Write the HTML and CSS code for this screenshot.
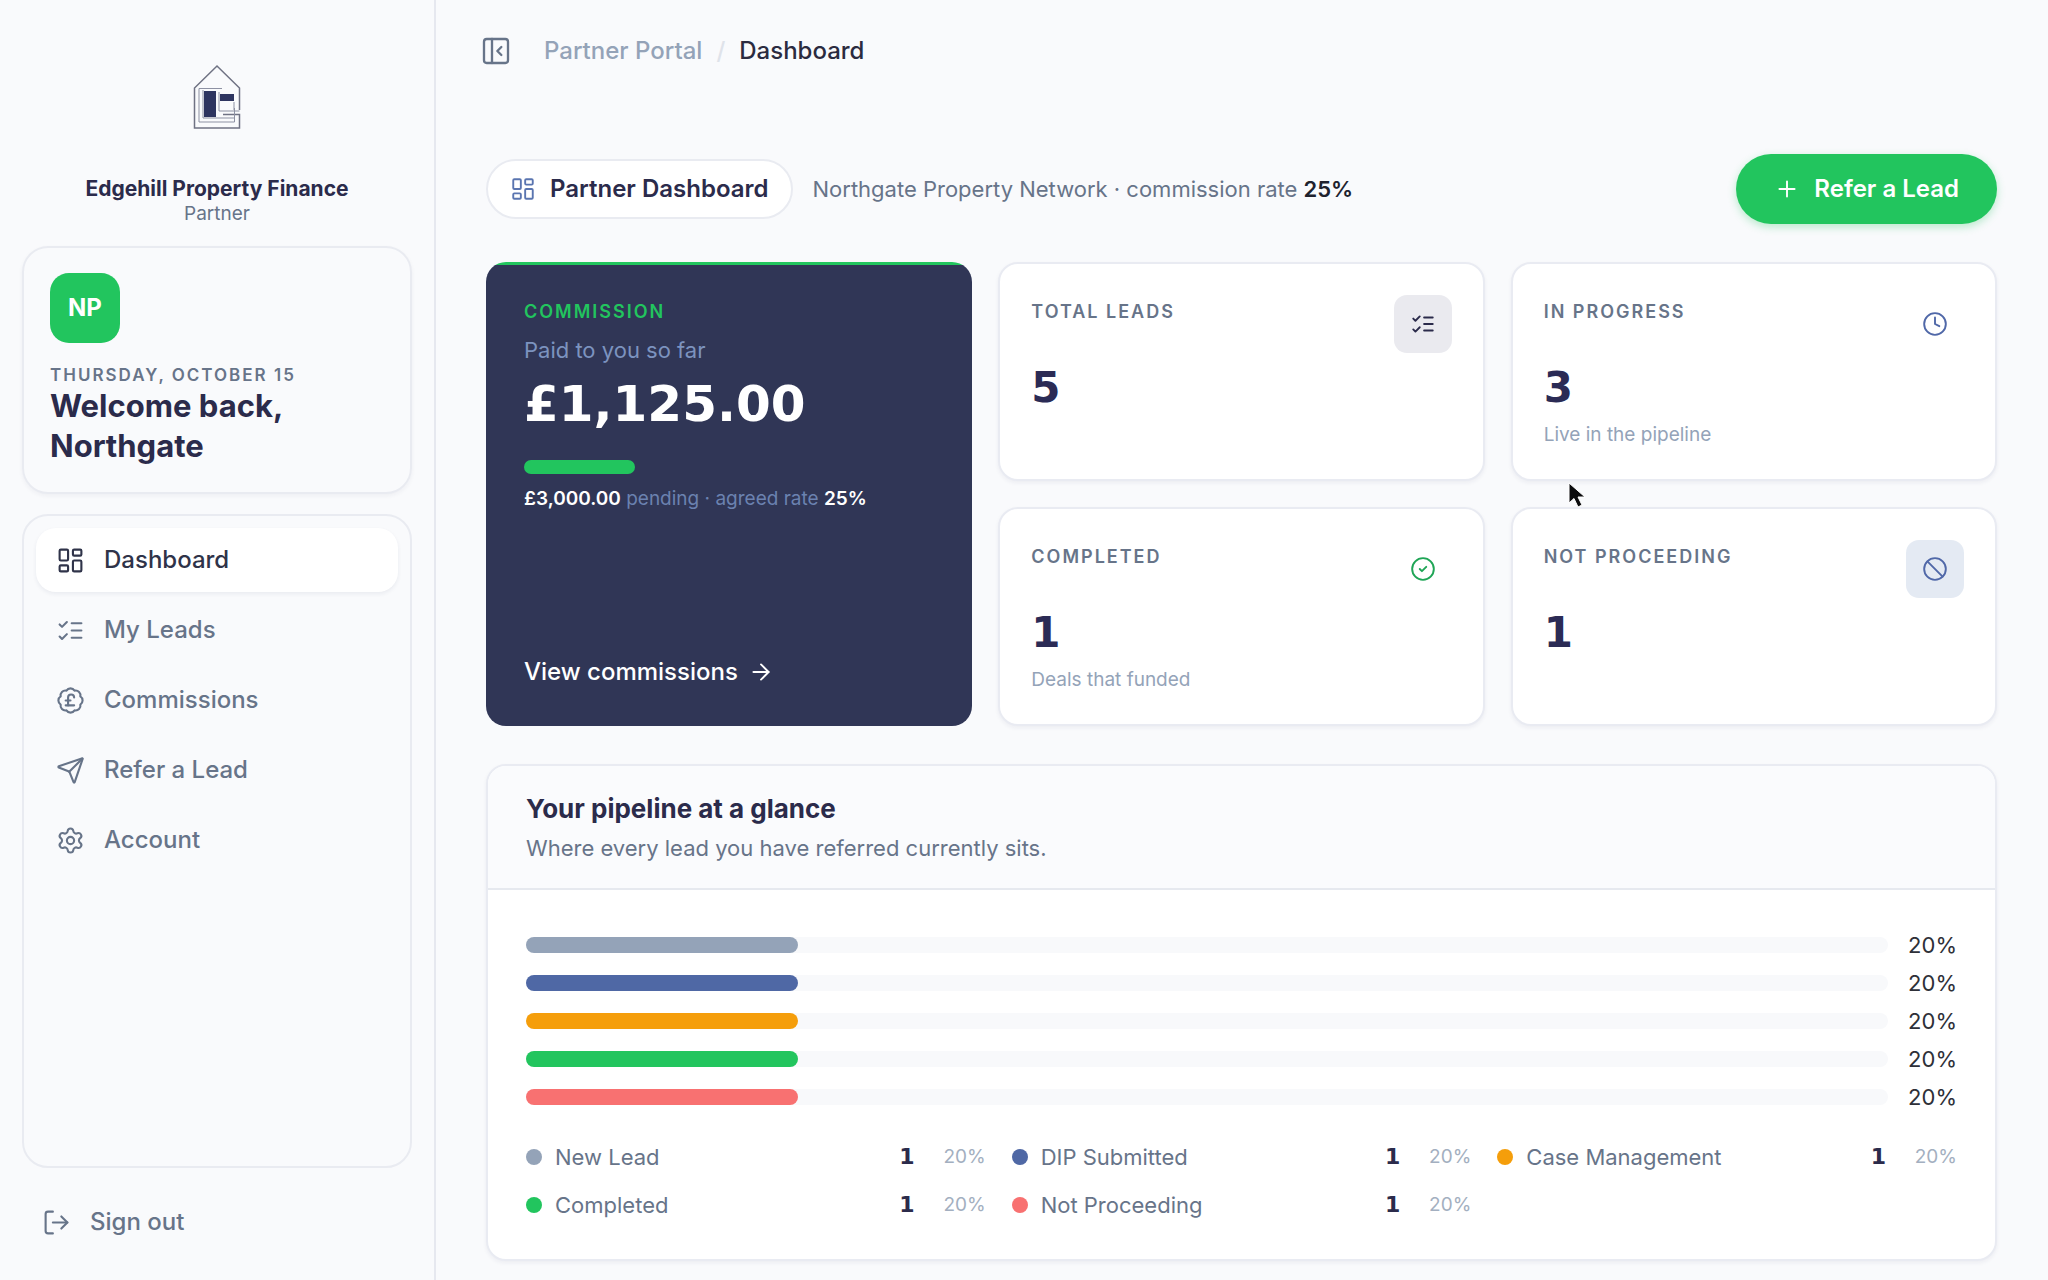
FILE: index.html
```html
<!DOCTYPE html>
<html lang="en">
<head>
    <meta charset="UTF-8">
    <meta name="viewport" content="width=device-width, initial-scale=1.0">
    <title>Partner Dashboard</title>
    <link rel="stylesheet" href="styles.css">
</head>
<body>
    <!-- icons used more than once -->
    <svg class="sprite" aria-hidden="true">
        <symbol id="i-dashboard" viewBox="0 0 24 24">
            <rect x="3" y="3" width="7" height="9" rx="1"/>
            <rect x="14" y="3" width="7" height="5" rx="1"/>
            <rect x="14" y="12" width="7" height="9" rx="1"/>
            <rect x="3" y="16" width="7" height="5" rx="1"/>
        </symbol>
        <symbol id="i-list" viewBox="0 0 24 24">
            <path d="m3 17 2 2 4-4"/><path d="m3 7 2 2 4-4"/>
            <path d="M13 6h8"/><path d="M13 12h8"/><path d="M13 18h8"/>
        </symbol>
    </svg>

    <div class="layout">
        <aside class="sidebar">
            <div class="brand">
                <svg class="logo" viewBox="0 0 48 66">
                    <path class="logo-line" d="M46.500 46V24L24 2 1.500 24v40h45V50.500H30"/>
                    <path class="logo-thin" d="M46.500 47H26V28"/>
                    <path class="logo-thin" d="M29 24.500H6v33.500h35.500V44M10 26v28h31M41 38v8"/>
                    <rect class="logo-fill" x="11" y="27" width="12" height="26"/>
                    <rect class="logo-fill" x="27" y="30" width="14" height="7"/>
                </svg>
                <strong class="brand-name">Edgehill Property Finance</strong>
                <span class="brand-role">Partner</span>
            </div>

            <div class="welcome">
                <div class="avatar">NP</div>
                <p class="date">Thursday, October 15</p>
                <h2>Welcome back,<br>Northgate</h2>
            </div>

            <nav class="nav">
                <a href="#" class="nav-item active">
                    <svg class="icon"><use href="#i-dashboard"/></svg>
                    Dashboard
                </a>
                <a href="#" class="nav-item">
                    <svg class="icon"><use href="#i-list"/></svg>
                    My Leads
                </a>
                <a href="#" class="nav-item">
                    <svg class="icon" viewBox="0 0 24 24">
                        <path d="M3.850 8.620a4 4 0 0 1 4.780-4.770 4 4 0 0 1 6.740 0 4 4 0 0 1 4.780 4.780 4 4 0 0 1 0 6.740 4 4 0 0 1-4.770 4.780 4 4 0 0 1-6.750 0 4 4 0 0 1-4.780-4.770 4 4 0 0 1 0-6.760Z"/>
                        <path d="M8 12h4"/><path d="M10 16V9.500a2.500 2.500 0 0 1 5 0"/><path d="M8 16h7"/>
                    </svg>
                    Commissions
                </a>
                <a href="#" class="nav-item">
                    <svg class="icon" viewBox="0 0 24 24">
                        <path d="M14.536 21.686a.5.5 0 0 0 .937-.024l6.500-19a.496.496 0 0 0-.635-.635l-19 6.500a.5.5 0 0 0-.024.937l7.930 3.180a2 2 0 0 1 1.112 1.110z"/>
                        <path d="m21.854 2.147-10.940 10.939"/>
                    </svg>
                    Refer a Lead
                </a>
                <a href="#" class="nav-item">
                    <svg class="icon" viewBox="0 0 24 24">
                        <path d="M9.671 4.136a2.340 2.340 0 0 1 4.659 0 2.340 2.340 0 0 0 3.319 1.915 2.340 2.340 0 0 1 2.330 4.033 2.340 2.340 0 0 0 0 3.831 2.340 2.340 0 0 1-2.330 4.033 2.340 2.340 0 0 0-3.319 1.915 2.340 2.340 0 0 1-4.659 0 2.340 2.340 0 0 0-3.320-1.915 2.340 2.340 0 0 1-2.330-4.033 2.340 2.340 0 0 0 0-3.831A2.340 2.340 0 0 1 6.350 6.051a2.340 2.340 0 0 0 3.319-1.915"/>
                        <circle cx="12" cy="12" r="3"/>
                    </svg>
                    Account
                </a>
            </nav>

            <button type="button" class="sign-out">
                <svg class="icon" viewBox="0 0 24 24">
                    <path d="m16 17 5-5-5-5"/><path d="M21 12H9"/>
                    <path d="M9 21H5a2 2 0 0 1-2-2V5a2 2 0 0 1 2-2h4"/>
                </svg>
                Sign out
            </button>
        </aside>

        <main class="main">
            <header class="topbar">
                <button type="button" class="collapse" aria-label="Collapse sidebar">
                    <svg class="icon icon-lg" viewBox="0 0 24 24">
                        <rect x="3" y="3" width="18" height="18" rx="2"/>
                        <path d="M9 3v18"/><path d="m16 15-3-3 3-3"/>
                    </svg>
                </button>
                <nav class="crumbs" aria-label="Breadcrumb">
                    <a href="#">Partner Portal</a>
                    <span class="slash">/</span>
                    <span class="current">Dashboard</span>
                </nav>
            </header>

            <section class="heading">
                <h1 class="pill">
                    <svg class="icon icon-sm"><use href="#i-dashboard"/></svg>
                    Partner Dashboard
                </h1>
                <p class="subtitle">Northgate Property Network · commission rate <b>25%</b></p>
                <button type="button" class="refer">
                    <svg class="icon icon-sm" viewBox="0 0 24 24"><path d="M5 12h14"/><path d="M12 5v14"/></svg>
                    Refer a Lead
                </button>
            </section>

            <section class="stats">
                <div class="commission">
                    <h3>Commission</h3>
                    <p class="paid">Paid to you so far</p>
                    <p class="amount">£1,125.00</p>
                    <div class="meter"><div class="meter-fill" style="width: 27%"></div></div>
                    <p class="pending"><b>£3,000.00</b> pending · agreed rate <b>25%</b></p>
                    <a href="#" class="view">
                        View commissions
                        <svg class="icon icon-sm" viewBox="0 0 24 24"><path d="M5 12h14"/><path d="m12 5 7 7-7 7"/></svg>
                    </a>
                </div>

                <div class="card stat">
                    <div class="stat-top">
                        <h3>Total Leads</h3>
                        <span class="tile tile-grey"><svg class="icon icon-sm"><use href="#i-list"/></svg></span>
                    </div>
                    <p class="value">5</p>
                </div>
                <div class="card stat">
                    <div class="stat-top">
                        <h3>In Progress</h3>
                        <span class="tile tile-blue">
                            <svg class="icon icon-sm" viewBox="0 0 24 24"><circle cx="12" cy="12" r="10"/><path d="M12 6v6l4 2"/></svg>
                        </span>
                    </div>
                    <p class="value">3</p>
                    <p class="note">Live in the pipeline</p>
                </div>
                <div class="card stat">
                    <div class="stat-top">
                        <h3>Completed</h3>
                        <span class="tile tile-green">
                            <svg class="icon icon-sm" viewBox="0 0 24 24"><circle cx="12" cy="12" r="10"/><path d="m9 12 2 2 4-4"/></svg>
                        </span>
                    </div>
                    <p class="value">1</p>
                    <p class="note">Deals that funded</p>
                </div>
                <div class="card stat">
                    <div class="stat-top">
                        <h3>Not Proceeding</h3>
                        <span class="tile tile-blue tile-filled">
                            <svg class="icon icon-sm" viewBox="0 0 24 24"><circle cx="12" cy="12" r="10"/><path d="m5 5 14 14"/></svg>
                        </span>
                    </div>
                    <p class="value">1</p>
                </div>
            </section>

            <section class="card pipeline">
                <div class="pipeline-head">
                    <h2>Your pipeline at a glance</h2>
                    <p>Where every lead you have referred currently sits.</p>
                </div>
                <div class="pipeline-body">
                    <div class="bars">
                        <div class="bar-row"><div class="track"><div class="fill grey" style="width: 20%"></div></div><span>20%</span></div>
                        <div class="bar-row"><div class="track"><div class="fill blue" style="width: 20%"></div></div><span>20%</span></div>
                        <div class="bar-row"><div class="track"><div class="fill amber" style="width: 20%"></div></div><span>20%</span></div>
                        <div class="bar-row"><div class="track"><div class="fill green" style="width: 20%"></div></div><span>20%</span></div>
                        <div class="bar-row"><div class="track"><div class="fill red" style="width: 20%"></div></div><span>20%</span></div>
                    </div>
                    <ul class="legend">
                        <li><i class="dot grey"></i>New Lead<b>1</b><small>20%</small></li>
                        <li><i class="dot blue"></i>DIP Submitted<b>1</b><small>20%</small></li>
                        <li><i class="dot amber"></i>Case Management<b>1</b><small>20%</small></li>
                        <li><i class="dot green"></i>Completed<b>1</b><small>20%</small></li>
                        <li><i class="dot red"></i>Not Proceeding<b>1</b><small>20%</small></li>
                    </ul>
                </div>
            </section>
        </main>
    </div>

    <svg class="cursor" viewBox="0 0 18 26" aria-hidden="true">
        <path d="M1 1v20l5-4.500 4 8.500 4-2-4-8h7z"/>
    </svg>
</body>
</html>
```
FILE: styles.css
```css
*{
    box-sizing: border-box;
    padding: 0;
    margin: 0;
}
body{
    font-family: Inter, "Liberation Sans", sans-serif;
    font-size: 22px;
    line-height: 28px;
    color: #677489;
    background: #f9fafc;
}
a{
    color: inherit;
    text-decoration: none;
}
button{
    font: inherit;
    color: inherit;
    border: 0;
    background: none;
    cursor: pointer;
}
.sprite{
    display: none;
}
.icon{
    width: 29px;
    height: 29px;
    flex: none;
    fill: none;
    stroke: currentColor;
    stroke-width: 1.75;
    stroke-linecap: round;
    stroke-linejoin: round;
}
.icon-sm{
    width: 26px;
    height: 26px;
}
.icon-lg{
    width: 32px;
    height: 32px;
}
.layout{
    display: flex;
    min-height: 100vh;
}

/* sidebar */
.sidebar{
    flex: none;
    display: flex;
    flex-direction: column;
    width: 436px;
    padding: 64px 22px 26px;
    border-right: 2px solid #e6e8ef;
}
.brand{
    display: flex;
    flex-direction: column;
    align-items: center;
    margin-bottom: 20px;
}
.logo{
    width: 48px;
    height: 66px;
    margin-bottom: 46px;
    fill: none;
}
.logo-line{
    stroke: #6f7283;
    stroke-width: 1.5;
}
.logo-thin{
    stroke: #8d91a3;
    stroke-width: 1;
}
.logo-fill{
    fill: #2e3560;
}
.brand-name{
    font-size: 21px;
    line-height: 26px;
    color: #2b2b4b;
}
.brand-role{
    font-size: 19px;
    line-height: 24px;
}
.welcome{
    padding: 25px 26px 26px;
    margin-bottom: 20px;
    border: 2px solid #e9ebf1;
    border-radius: 26px;
    box-shadow: 0 2px 4px rgba(30, 41, 80, 0.05);
}
.avatar{
    display: flex;
    align-items: center;
    justify-content: center;
    width: 70px;
    height: 70px;
    margin-bottom: 21px;
    border-radius: 19px;
    background: #22c55e;
    color: #fff;
    font-size: 24px;
    font-weight: 700;
}
.date{
    font-size: 17px;
    line-height: 22px;
    font-weight: 600;
    letter-spacing: 2px;
    text-transform: uppercase;
}
.welcome h2{
    font-size: 31px;
    line-height: 40px;
    color: #2b2b4b;
}
.nav{
    flex: 1;
    display: flex;
    flex-direction: column;
    gap: 6px;
    padding: 12px;
    border: 2px solid #e9ebf1;
    border-radius: 26px;
}
.nav-item,
.sign-out{
    display: flex;
    align-items: center;
    gap: 19px;
    height: 64px;
    padding: 0 20px;
    border-radius: 20px;
    font-size: 24px;
    font-weight: 500;
}
.nav-item.active{
    background: #fff;
    color: #2f3349;
    box-shadow: 0 2px 4px rgba(30, 41, 80, 0.07);
}
.sign-out{
    margin-top: 22px;
}

/* main column */
.main{
    flex: 1;
    min-width: 0;
    padding: 0 51px 18px 50px;
}
.topbar{
    display: flex;
    align-items: center;
    height: 102px;
    margin-bottom: 52px;
}
.collapse{
    height: 32px;
    margin-left: -6px;
}
.crumbs{
    display: flex;
    gap: 14px;
    margin-left: 32px;
    font-size: 24px;
    font-weight: 500;
}
.crumbs a{
    color: #94a3b8;
}
.crumbs .slash{
    color: #dfe3ea;
}
.crumbs .current{
    color: #2b2b40;
}
.heading{
    display: flex;
    align-items: center;
    gap: 20px;
    margin-bottom: 38px;
}
.pill{
    display: flex;
    align-items: center;
    gap: 14px;
    height: 60px;
    padding: 0 22px;
    border: 2px solid #e9ebf1;
    border-radius: 30px;
    background: #fff;
    font-size: 24px;
    font-weight: 600;
    color: #2b2b4b;
}
.pill .icon{
    color: #5a75b0;
}
.subtitle b{
    font-weight: 600;
    color: #20222e;
}
.refer{
    display: flex;
    align-items: center;
    gap: 14px;
    height: 70px;
    padding: 0 38px;
    margin-left: auto;
    border-radius: 35px;
    background: #22c55e;
    color: #fff;
    font-size: 24px;
    font-weight: 600;
    box-shadow: 0 3px 8px rgba(34, 197, 94, 0.3);
}

/* stat cards */
.stats{
    display: grid;
    grid-template-columns: repeat(3, 1fr);
    grid-auto-rows: minmax(219px, auto);
    gap: 26px;
    margin-bottom: 38px;
}
.stats h3{
    font-size: 18px;
    line-height: 24px;
    font-weight: 600;
    letter-spacing: 2px;
    text-transform: uppercase;
}
.card{
    border: 2px solid #e9ebf2;
    border-radius: 20px;
    background: #fff;
    box-shadow: 0 2px 4px rgba(30, 41, 80, 0.06);
}
.commission{
    grid-row: span 2;
    display: flex;
    flex-direction: column;
    align-items: flex-start;
    padding: 38px 38px 40px;
    border-radius: 20px;
    background: linear-gradient(#22c55e 3px, #303656 3px);
    color: #6b82b0;
}
.commission h3{
    margin-bottom: 12px;
    color: #22c55e;
}
.paid{
    color: #7c93bf;
}
.amount{
    margin: 12px 0 28px;
    font-family: "DejaVu Sans", sans-serif;
    font-size: 50px;
    line-height: 56px;
    font-weight: 700;
    color: #fff;
}
.meter{
    width: 100%;
    height: 14px;
    margin-bottom: 12px;
}
.meter-fill{
    height: 14px;
    border-radius: 7px;
    background: #22c55e;
}
.pending{
    font-size: 19px;
    line-height: 26px;
}
.pending b{
    font-weight: 600;
    color: #fff;
}
.view{
    display: flex;
    align-items: center;
    gap: 10px;
    margin-top: auto;
    font-size: 24px;
    font-weight: 500;
    color: #fff;
}
.stat{
    padding: 31px;
}
.stat-top{
    display: flex;
    justify-content: space-between;
}
.stat h3{
    margin-top: 5px;
}
.tile{
    display: flex;
    align-items: center;
    justify-content: center;
    width: 58px;
    height: 58px;
    border-radius: 13px;
}
.tile-grey{
    background: #eaeaef;
    color: #2b2b4b;
}
.tile-blue{
    color: #5068a8;
}
.tile-green{
    color: #1fa556;
}
.tile-filled{
    background: #e4eaf3;
}
.value{
    margin-top: 11px;
    font-family: "DejaVu Sans", sans-serif;
    font-size: 42px;
    line-height: 48px;
    font-weight: 700;
    color: #2b2b55;
}
.note{
    margin-top: 11px;
    font-size: 19px;
    line-height: 24px;
    color: #94a3b8;
}

/* pipeline */
.pipeline-head{
    padding: 28px 38px 26px;
    border-bottom: 2px solid #e6e9ef;
    border-radius: 18px 18px 0 0;
    background: #fafbfd;
}
.pipeline-head h2{
    margin-bottom: 10px;
    font-size: 26px;
    line-height: 30px;
    color: #2b2b4b;
}
.pipeline-body{
    padding: 41px 38px 40px;
}
.bars{
    display: grid;
    gap: 10px;
    margin-bottom: 32px;
}
.bar-row{
    display: flex;
    align-items: center;
    gap: 20px;
    color: #2e3038;
}
.track{
    flex: 1;
    height: 16px;
    border-radius: 8px;
    background: #f8f9fb;
}
.fill{
    height: 16px;
    border-radius: 8px;
}
.grey{
    background: #94a3b8;
}
.blue{
    background: #4f68a5;
}
.amber{
    background: #f59e0b;
}
.green{
    background: #22c55e;
}
.red{
    background: #f87171;
}
.legend{
    display: grid;
    grid-template-columns: repeat(3, 1fr);
    gap: 20px 26px;
    list-style: none;
}
.legend li{
    display: flex;
    align-items: center;
}
.dot{
    width: 16px;
    height: 16px;
    margin-right: 13px;
    border-radius: 50%;
}
.legend b{
    margin-left: auto;
    font-family: "DejaVu Sans", sans-serif;
    font-size: 22px;
    color: #2b2b4b;
}
.legend small{
    width: 71px;
    font-size: 19px;
    text-align: right;
    color: #a3afc0;
}

.cursor{
    position: absolute;
    top: 482px;
    left: 1568px;
    width: 18px;
    height: 26px;
    fill: #0b0b0d;
    stroke: #fff;
    stroke-width: 1;
}
```
